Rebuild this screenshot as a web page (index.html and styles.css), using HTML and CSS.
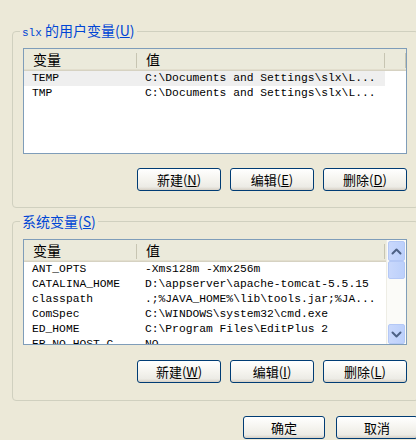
FILE: index.html
```html
<!doctype html>
<html lang="zh-CN">
  <head>
    <meta charset="UTF-8" />
    <title>环境变量</title>
    <link rel="stylesheet" href="styles.css">
  </head>
  <body>
    <div class="dialog">
      <fieldset class="group user">
        <legend><span class="mono">slx</span> 的用户变量(<u>U</u>)</legend>
        <div class="list">
          <div class="table">
            <div class="head">
              <div class="col">变量</div>
              <div class="col">值</div>
              <div class="col"></div>
            </div>
            <div class="row selected"><span>TEMP</span><span>C:\Documents and Settings\slx\L...</span></div>
            <div class="row"><span>TMP</span><span>C:\Documents and Settings\slx\L...</span></div>
          </div>
        </div>
        <div class="buttons">
          <button class="button">新建(<u>N</u>)</button>
          <button class="button">编辑(<u>E</u>)</button>
          <button class="button">删除(<u>D</u>)</button>
        </div>
      </fieldset>

      <fieldset class="group system">
        <legend>系统变量(<u>S</u>)</legend>
        <div class="list">
          <div class="table">
            <div class="head">
              <div class="col">变量</div>
              <div class="col">值</div>
              <div class="col"></div>
            </div>
            <div class="row"><span>ANT_OPTS</span><span>-Xms128m -Xmx256m</span></div>
            <div class="row"><span>CATALINA_HOME</span><span>D:\appserver\apache-tomcat-5.5.15</span></div>
            <div class="row"><span>classpath</span><span>.;%JAVA_HOME%\lib\tools.jar;%JA...</span></div>
            <div class="row"><span>ComSpec</span><span>C:\WINDOWS\system32\cmd.exe</span></div>
            <div class="row"><span>ED_HOME</span><span>C:\Program Files\EditPlus 2</span></div>
            <div class="row"><span>EP_NO_HOST_C</span><span>NO</span></div>
          </div>
          <div class="scrollbar">
            <div class="arrow">
              <svg width="11" height="7" viewBox="0 0 11 7" fill="none" stroke="#4d6185" stroke-width="2" stroke-linecap="round" stroke-linejoin="round"><path d="M1.5 5.5 L5.5 1.5 L9.5 5.5"/></svg>
            </div>
            <div class="thumb"></div>
            <div class="track"></div>
            <div class="arrow">
              <svg width="11" height="7" viewBox="0 0 11 7" fill="none" stroke="#4d6185" stroke-width="2" stroke-linecap="round" stroke-linejoin="round"><path d="M1.5 1.5 L5.5 5.5 L9.5 1.5"/></svg>
            </div>
          </div>
        </div>
        <div class="buttons">
          <button class="button">新建(<u>W</u>)</button>
          <button class="button">编辑(<u>I</u>)</button>
          <button class="button">删除(<u>L</u>)</button>
        </div>
      </fieldset>

      <div class="footer">
        <button class="button small">确定</button>
        <button class="button small">取消</button>
      </div>
    </div>
  </body>
</html>
```

FILE: styles.css
```css
* {
  box-sizing: border-box;
}

body {
  margin: 0;
  width: 416px;
  height: 440px;
  overflow: hidden;
  background: #ece9d8;
  font-family: "Noto Sans CJK SC", sans-serif;
  color: #000;
}

.dialog {
  padding: 22px 0 0 12px;
}

.group {
  width: 407px;
  margin: 0;
  padding: 7px 10px 16px;
  border: 1px solid #d0d0bf;
  border-radius: 4px;
}

.group.system {
  margin-top: 5px;
  padding-top: 10px;
  padding-bottom: 17px;
}

.group legend {
  padding: 0 2px;
  margin-left: -3px;
  font-size: 14px;
  line-height: 16px;
  color: #0046d5;
}

.mono {
  font-family: "Liberation Mono", monospace;
  font-size: 11px;
}

.list {
  display: flex;
  width: 384px;
  height: 106px;
  border: 1px solid #7f9db9;
  background: #fff;
  overflow: hidden;
}

.table {
  flex: 1;
  min-width: 0;
}

.head {
  display: grid;
  grid-template-columns: 113px 248px 1fr;
  height: 22px;
  background: #ebeadb;
  box-shadow: inset 0 -1px #d6d2c2, inset 0 -2px #e2decd;
}

.head .col {
  padding: 0 0 2px 9px;
  font-size: 14px;
  line-height: 20px;
  background: linear-gradient(#c7c5b2, #c7c5b2) right center / 1px 15px no-repeat;
}

.row {
  display: grid;
  grid-template-columns: 113px 248px;
  width: 361px;
  height: 15px;
  font-family: "Liberation Mono", monospace;
  font-size: 11.3px;
  line-height: 15px;
}

.row span {
  padding-left: 8px;
  white-space: nowrap;
  overflow: hidden;
}

.row.selected {
  background: #efefef;
}

.scrollbar {
  display: flex;
  flex-direction: column;
  width: 20px;
  padding: 1px 1px 0 1px;
  background: #fbfbf8;
  border-left: 1px solid #eeede5;
}

.arrow,
.thumb {
  display: flex;
  align-items: center;
  justify-content: center;
  height: 20px;
  background: linear-gradient(90deg, #c9d8fc, #bcd0fb);
  border: 1px solid #b4c8f6;
  border-radius: 2px;
}

.thumb {
  height: 18px;
}

.track {
  flex: 1;
}

.buttons {
  display: flex;
  justify-content: flex-end;
  gap: 9px;
  width: 384px;
  margin-top: 14px;
}

.system .buttons {
  margin-top: 15px;
}

.button {
  width: 84px;
  height: 23px;
  padding: 0;
  border: 1px solid #003c74;
  border-radius: 3px;
  background: linear-gradient(180deg, #ffffff 0%, #f5f4ef 50%, #ecebe5 85%, #d6d0c5 100%);
  font-family: "Noto Sans CJK SC", sans-serif;
  font-size: 13px;
  line-height: 20px;
  color: #000;
}

.footer {
  display: flex;
  justify-content: flex-end;
  gap: 11px;
  width: 408px;
  padding-right: 2px;
  margin-top: 15px;
}

.button.small {
  width: 82px;
}
```
